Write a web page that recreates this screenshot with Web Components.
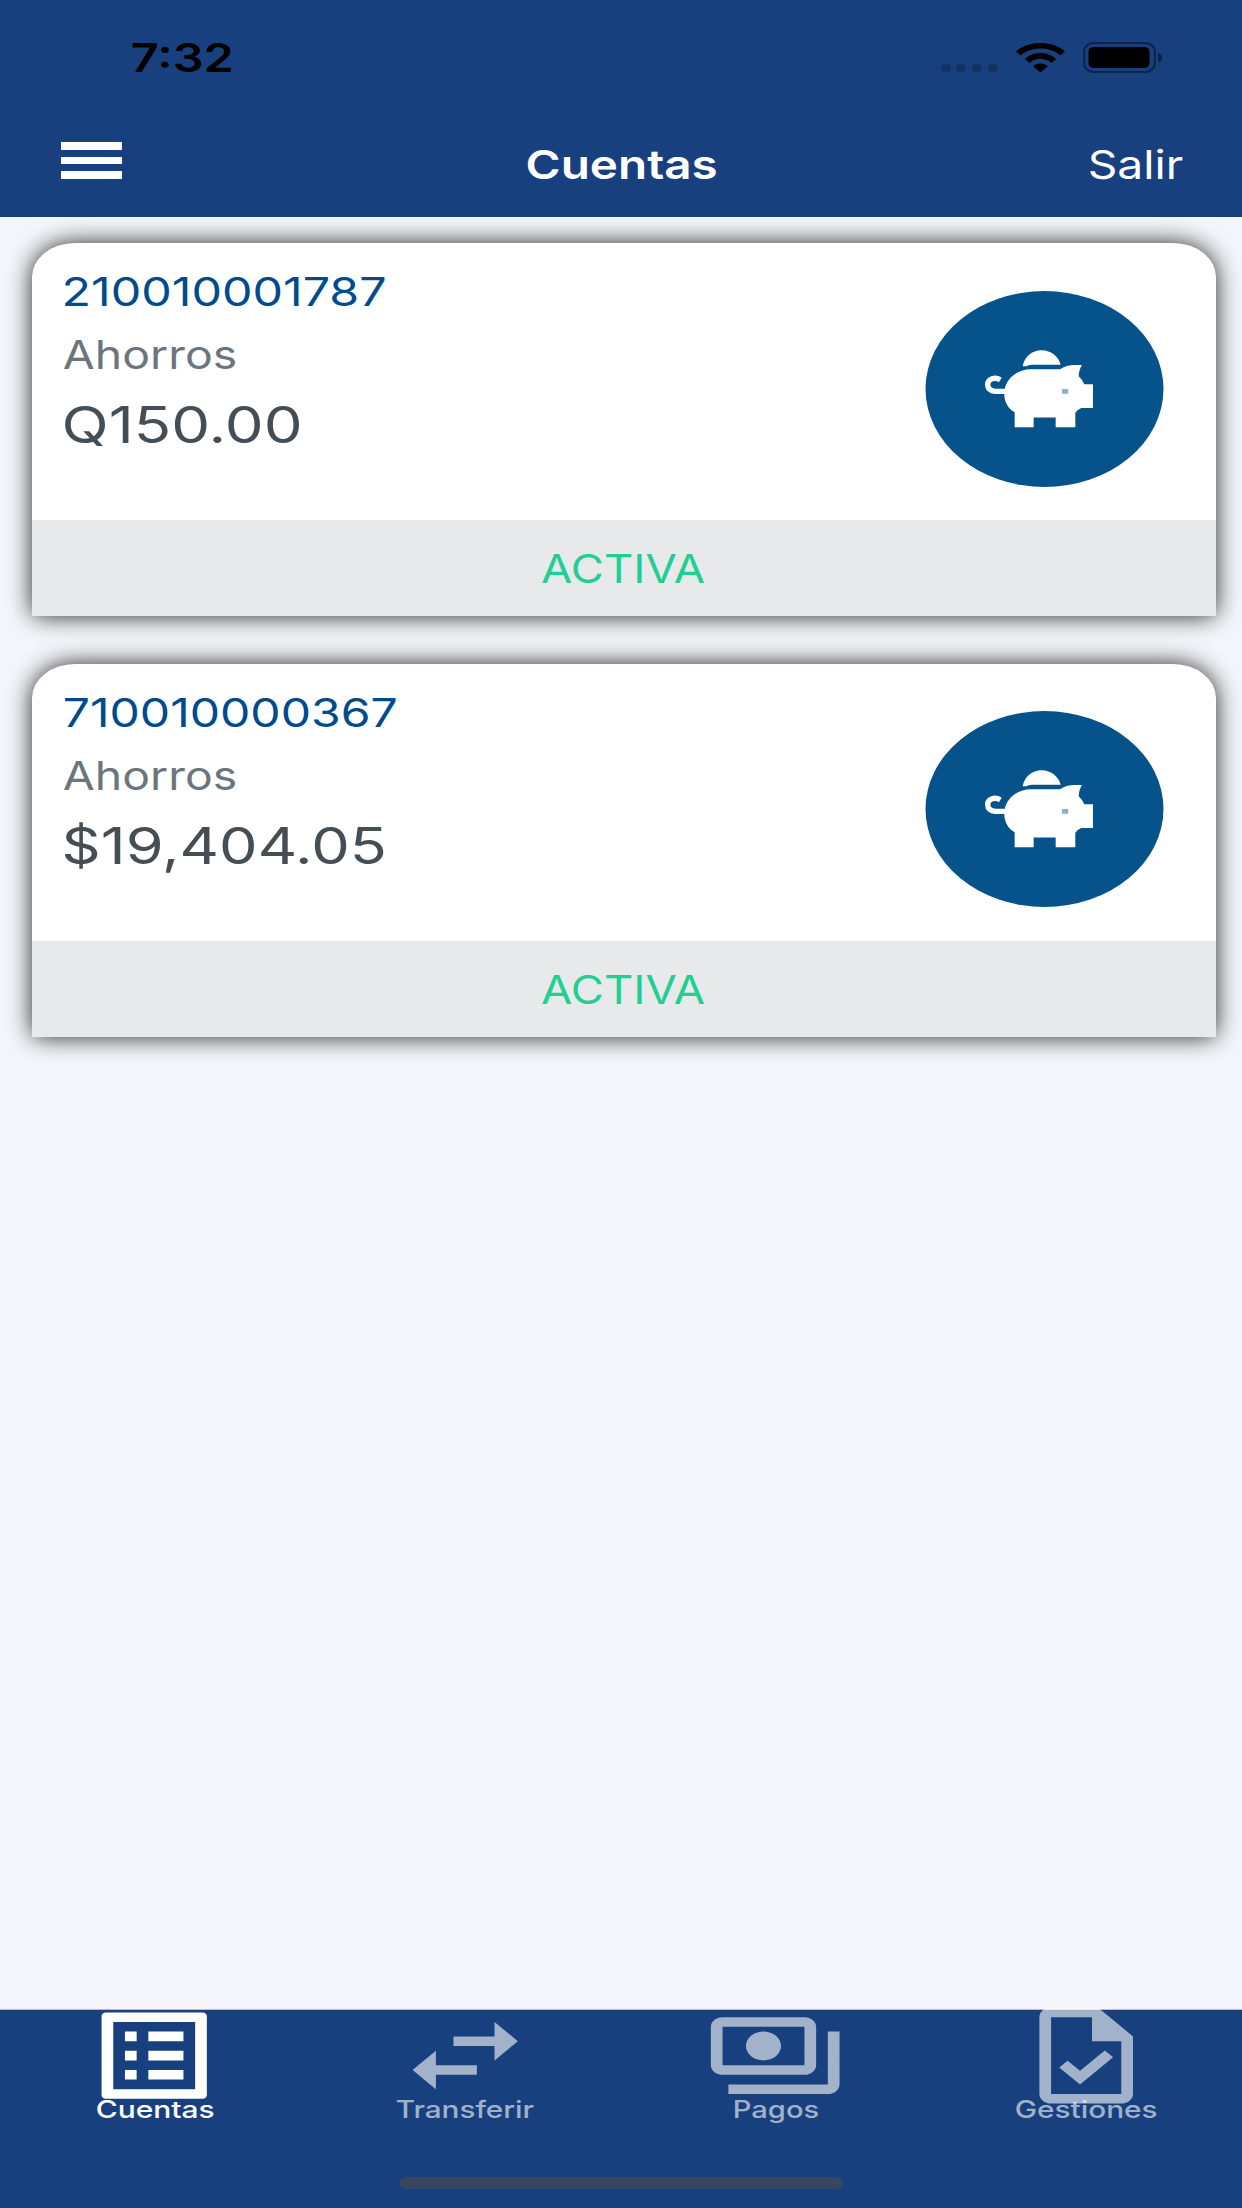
<!DOCTYPE html>
<html lang="es">
<head>
<meta charset="utf-8">
<title>Cuentas</title>
<style>
  html, body { margin: 0; height: 100%; }
  body { font-family: Inter, "Liberation Sans", sans-serif; background: #f4f6fb; }
</style>
</head>
<body>
<bank-app>
  <status-bar slot="top" time="7:32"></status-bar>
  <nav-bar slot="top">
    <wide-text size="40" weight="600" width="188.5">Cuentas</wide-text>
    <wide-text slot="action" size="40" width="93">Salir</wide-text>
  </nav-bar>

  <account-card>
    <wide-text slot="number" size="39.5" width="321">210010001787</wide-text>
    <wide-text slot="type" size="39.5" width="171">Ahorros</wide-text>
    <wide-text slot="balance" size="50" width="235.5">Q150.00</wide-text>
    <wide-text slot="status" size="39" width="163">ACTIVA</wide-text>
  </account-card>
  <account-card>
    <wide-text slot="number" size="39.5" width="332">710010000367</wide-text>
    <wide-text slot="type" size="39.5" width="171">Ahorros</wide-text>
    <wide-text slot="balance" size="50" width="320">$19,404.05</wide-text>
    <wide-text slot="status" size="39" width="163">ACTIVA</wide-text>
  </account-card>

  <tab-bar slot="bottom">
    <tab-item icon="list" active><wide-text size="24" weight="500" width="116.5">Cuentas</wide-text></tab-item>
    <tab-item icon="swap"><wide-text size="24" weight="500" width="136.7">Transferir</wide-text></tab-item>
    <tab-item icon="cash"><wide-text size="24" weight="500" width="84">Pagos</wide-text></tab-item>
    <tab-item icon="task"><wide-text size="24" weight="500" width="140.5">Gestiones</wide-text></tab-item>
  </tab-bar>
</bank-app>

<script>
(function () {
  const define = (name, html, setup) => {
    customElements.define(name, class extends HTMLElement {
      connectedCallback() {
        if (this.shadowRoot) return;
        const root = this.attachShadow({ mode: 'open' });
        root.innerHTML = html;
        if (setup) setup(this, root);
      }
    });
  };

  // <wide-text size weight width>: one line of text, its ink stretched to the given width
  const ctx = document.createElement('canvas').getContext('2d');

  define('wide-text', `
    <style>
      :host { display: block; flex: none; white-space: nowrap; }
      span { display: inline-block; transform-origin: 0 50%; vertical-align: top; }
    </style>
    <span><slot></slot></span>`, (host, root) => {
    const size = host.getAttribute('size');
    const weight = host.getAttribute('weight') || '400';
    const width = parseFloat(host.getAttribute('width'));
    ctx.font = `${weight} ${size}px Inter, "Liberation Sans", sans-serif`;
    const m = ctx.measureText(host.textContent.trim());
    const scale = width / (m.actualBoundingBoxRight + m.actualBoundingBoxLeft);
    host.style.font = `${weight} ${size}px/var(--line, 1.2) Inter, "Liberation Sans", sans-serif`;
    host.style.width = width + 'px';
    root.querySelector('span').style.transform =
      `translateX(${(m.actualBoundingBoxLeft * scale).toFixed(2)}px) scaleX(${scale.toFixed(4)})`;
  });

  define('bank-app', `
    <style>
      :host { display: flex; flex-direction: column; width: 1242px; height: 2208px; overflow: hidden; background: #f4f6fb; }
      header, footer { flex: none; position: relative; }
      main { flex: 1; min-height: 0; display: flex; flex-direction: column; gap: 47.5px; padding: 26px 26px 0 32px; }
    </style>
    <header><slot name="top"></slot></header>
    <main><slot></slot></main>
    <footer><slot name="bottom"></slot></footer>`);

  define('status-bar', `
    <style>
      :host { display: flex; align-items: center; justify-content: space-between; height: 115px;
              padding: 0 79.5px 0 132px; box-sizing: border-box; background: #19407e; color: #000; }
      .right { display: flex; align-items: center; }
      .dots { display: flex; gap: 5.6px; align-self: flex-end; margin: 0 18.5px .8px 0; }
      .dots i { width: 10px; height: 8px; border-radius: 4px / 3px; background: #000; opacity: .2; }
      .wifi { margin-right: 18px; }
      svg { display: block; }
    </style>
    <wide-text size="40" weight="600" width="99.5"></wide-text>
    <div class="right">
      <div class="dots"><i></i><i></i><i></i><i></i></div>
      <svg class="wifi" width="49" height="29.5" viewBox="0 0 50 30" preserveAspectRatio="none">
        <path d="M0 8.6C13-2.9 37-2.9 50 8.6L45.3 12.6C34.5 3.3 15.5 3.3 4.7 12.6Z"/>
        <path d="M9 16.2C17.8 8.3 32.2 8.3 41 16.2L36.3 20.3C30 14.6 20 14.6 13.7 20.3Z"/>
        <path d="M17.5 23.7C21.5 20 28.5 20 32.5 23.7L25 30Z"/>
      </svg>
      <svg width="79.5" height="31" viewBox="0 0 79.5 31">
        <rect x="1.2" y="1" width="70.6" height="29" rx="10" ry="8.3" fill="none" stroke="#000" stroke-width="2.2" opacity=".42"/>
        <rect x="5.5" y="5" width="61" height="21" rx="5.5" ry="4.5"/>
        <path d="M75 10.7q4.3 1.2 4.3 5t-4.3 5z" opacity=".45"/>
      </svg>
    </div>`, (host, root) => {
    const old = root.querySelector('wide-text');
    const time = old.cloneNode();
    time.textContent = host.getAttribute('time');
    old.replaceWith(time);
  });

  define('nav-bar', `
    <style>
      :host { display: grid; grid-template-columns: 1fr auto 1fr; align-items: center; height: 102px;
              padding: 0 59px 3px 61px; box-sizing: border-box; background: #19407e; color: #fff; }
      .menu { display: grid; gap: 7px; width: 61px; margin-bottom: 8px; }
      .menu i { height: 7.5px; background: #fff; }
      .action { justify-self: end; }
    </style>
    <div class="menu"><i></i><i></i><i></i></div>
    <slot></slot>
    <div class="action"><slot name="action"></slot></div>`);

  // the footer strip keeps square corners over the slightly rounded shadow
  define('account-card', `
    <style>
      :host { display: block; flex: none; height: 373px; background: #fff;
              border-radius: 43px 43px 10px 10px / 34px 34px 8px 8px;
              box-shadow: 0 0 25px rgba(0, 0, 0, .85); }
      .body { display: flex; justify-content: space-between; height: 277px; padding: 18px 52px 0 31.5px; box-sizing: border-box; }
      .number { --line: 62px; color: #004b8d; }
      .type { --line: 64px; color: #6c757d; }
      .balance { --line: 76px; color: #454d55; }
      .state { --line: 97px; display: flex; justify-content: center; height: 96px; padding-right: 3px;
               background: #e8e9eb; color: #1fcf93; }
      svg { display: block; margin-top: 29.5px; }
    </style>
    <div class="body">
      <div>
        <div class="number"><slot name="number"></slot></div>
        <div class="type"><slot name="type"></slot></div>
        <div class="balance"><slot name="balance"></slot></div>
      </div>
      <svg width="239" height="196" viewBox="0 0 239 196">
        <ellipse cx="119.5" cy="98" rx="119" ry="98" fill="#06528a"/>
        <g transform="translate(35 39.3) scale(.3333)" fill="#fff">
          <path d="M188 108C193 80 216 60 245 60S296 80 302 103H216Q204 103 200 108Z"/>
          <path d="M134 178C140 144 170 118 212 117H300Q318 104 345 104H366Q357 117 356 138Q368 149 373 162H399V233H364Q352 238 346 247V291H287V262H221V291H164V246C143 235 132 211 133 189Z"/>
          <path d="M121 149C106 139 83 145 83 163Q84 182 106 183H138" fill="none" stroke="#fff" stroke-width="16"/>
          <rect x="306" y="176" width="19" height="14" rx="2" fill="#8db1cd"/>
        </g>
      </svg>
    </div>
    <div class="state"><slot name="status"></slot></div>`);

  define('tab-bar', `
    <style>
      :host { display: block; height: 198.5px; background: #19407e; box-shadow: 0 -1px #b9bdc6; }
      .tabs { display: flex; height: 167.5px; }
      .home { width: 444px; height: 12px; margin: 0 auto; border-radius: 8px / 6px; background: #38465f; }
    </style>
    <div class="tabs"><slot></slot></div>
    <div class="home"></div>`);

  const ICONS = {
    list: 'M20.2 3H3.8c-.5 0-.8.3-.8.8v16.4c0 .5.3.8.8.8h16.4c.5 0 .8-.3.8-.8V3.8c0-.5-.3-.8-.8-.8zM19 19H5V5h14v14zM11 7h6v2h-6V7zm0 4h6v2h-6v-2zm0 4h6v2h-6v-2zM7 7h2v2H7V7zm0 4h2v2H7v-2zm0 4h2v2H7v-2z',
    swap: 'M6.99 11L3 15l3.99 4v-3H14v-2H6.99v-3zM21 9l-3.99-4v3H10v2h7.01v3L21 9z',
    cash: 'M19 14V6c0-1.1-.9-2-2-2H3c-1.1 0-2 .9-2 2v8c0 1.1.9 2 2 2h14c1.1 0 2-.9 2-2zm-2 0H3V6h14v8zm-7-7c-1.66 0-3 1.34-3 3s1.34 3 3 3 3-1.34 3-3-1.34-3-3-3zm13 0v11c0 1.1-.9 2-2 2H4v-2h17V7h2z',
    task: 'M14 2H6c-1.1 0-2 .9-2 2v16c0 1.1.9 2 2 2h12c1.1 0 2-.9 2-2V8l-6-6zm4 18H6V4h7v5h5v11zM8.82 13.05L7.4 14.46 10.94 18l5.66-5.66-1.41-1.41-4.24 4.24-2.13-2.12z'
  };

  define('tab-item', `
    <style>
      :host { --line: 31px; display: flex; flex: 1; flex-direction: column; align-items: center; color: rgba(255, 255, 255, .6); }
      :host([active]) { color: #fff; }
      svg { flex: none; display: block; margin: -11.7px 1.2px -19px 0; fill: currentColor; overflow: visible; }
      ::slotted(*) { margin-right: 1px; }
    </style>
    <svg width="140.4" height="115.2" viewBox="0 0 24 24" preserveAspectRatio="none"><path fill-rule="evenodd"/></svg>
    <slot></slot>`, (host, root) => {
    root.querySelector('path').setAttribute('d', ICONS[host.getAttribute('icon')]);
  });
})();
</script>
</body>
</html>
